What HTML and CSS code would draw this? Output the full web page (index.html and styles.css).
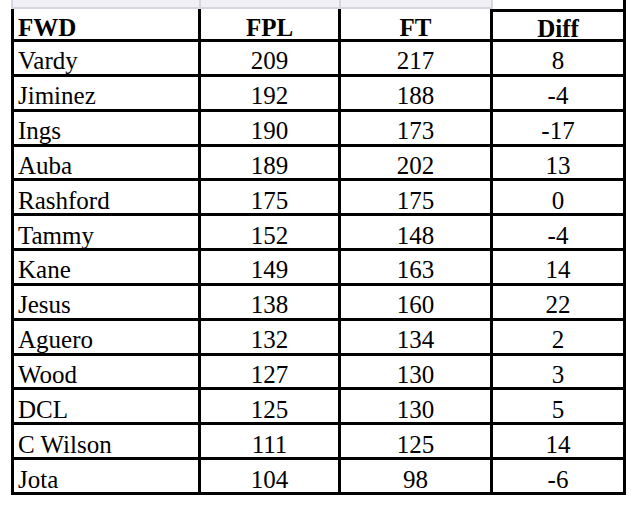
FILE: index.html
```html
<!DOCTYPE html>
<html>
<head>
<meta charset="utf-8">
<link rel="stylesheet" href="styles.css">
</head>
<body>
<div class="sheet">
  <div class="strip">
    <div class="sc sc-first"></div>
    <div class="sc"></div>
    <div class="sc"></div>
    <div class="sc sc-last"></div>
  </div>
  <div class="grid">
    <div class="cell head first name">FWD</div>
    <div class="cell head">FPL</div>
    <div class="cell head">FT</div>
    <div class="cell head diff">Diff</div>

    <div class="cell first name">Vardy</div><div class="cell">209</div><div class="cell">217</div><div class="cell">8</div>
    <div class="cell first name">Jiminez</div><div class="cell">192</div><div class="cell">188</div><div class="cell">-4</div>
    <div class="cell first name">Ings</div><div class="cell">190</div><div class="cell">173</div><div class="cell">-17</div>
    <div class="cell first name">Auba</div><div class="cell">189</div><div class="cell">202</div><div class="cell">13</div>
    <div class="cell first name">Rashford</div><div class="cell">175</div><div class="cell">175</div><div class="cell">0</div>
    <div class="cell first name">Tammy</div><div class="cell">152</div><div class="cell">148</div><div class="cell">-4</div>
    <div class="cell first name">Kane</div><div class="cell">149</div><div class="cell">163</div><div class="cell">14</div>
    <div class="cell first name">Jesus</div><div class="cell">138</div><div class="cell">160</div><div class="cell">22</div>
    <div class="cell first name">Aguero</div><div class="cell">132</div><div class="cell">134</div><div class="cell">2</div>
    <div class="cell first name">Wood</div><div class="cell">127</div><div class="cell">130</div><div class="cell">3</div>
    <div class="cell first name">DCL</div><div class="cell">125</div><div class="cell">130</div><div class="cell">5</div>
    <div class="cell first name">C Wilson</div><div class="cell">111</div><div class="cell">125</div><div class="cell">14</div>
    <div class="cell first name">Jota</div><div class="cell">104</div><div class="cell">98</div><div class="cell">-6</div>
  </div>
</div>
</body>
</html>
```

FILE: styles.css
```css
html, body {
  margin: 0;
  padding: 0;
  background: #ffffff;
}

.sheet {
  padding-left: 11px;
  font-family: "Liberation Serif", "Times New Roman", serif;
  color: #000;
}

.strip {
  display: grid;
  grid-template-columns: 190px 140px 152px 133px;
  height: 9px;
}

.sc {
  box-sizing: border-box;
  background: #f1f1f5;
  border-right: 2px solid #d6d6de;
  border-bottom: 2px solid #d6d6de;
}

.sc-first {
  border-left: 2px solid #d6d6de;
}

.sc-last {
  background: #ffffff;
  border-bottom: none;
  border-right: 3px solid #000;
}

.grid {
  display: grid;
  grid-template-columns: 190px 140px 152px 133px;
  grid-template-rows: 33px repeat(13, 34.85px);
}

.cell {
  box-sizing: border-box;
  border-right: 3px solid #000;
  border-bottom: 3px solid #000;
  font-size: 25px;
  line-height: 1;
  display: flex;
  align-items: center;
  justify-content: center;
  padding-top: 6px;
}

.first {
  border-left: 3px solid #000;
}

.name {
  justify-content: flex-start;
  padding-left: 4px;
}

.head {
  font-weight: bold;
}

.diff {
  border-top: 3px solid #000;
}
```
